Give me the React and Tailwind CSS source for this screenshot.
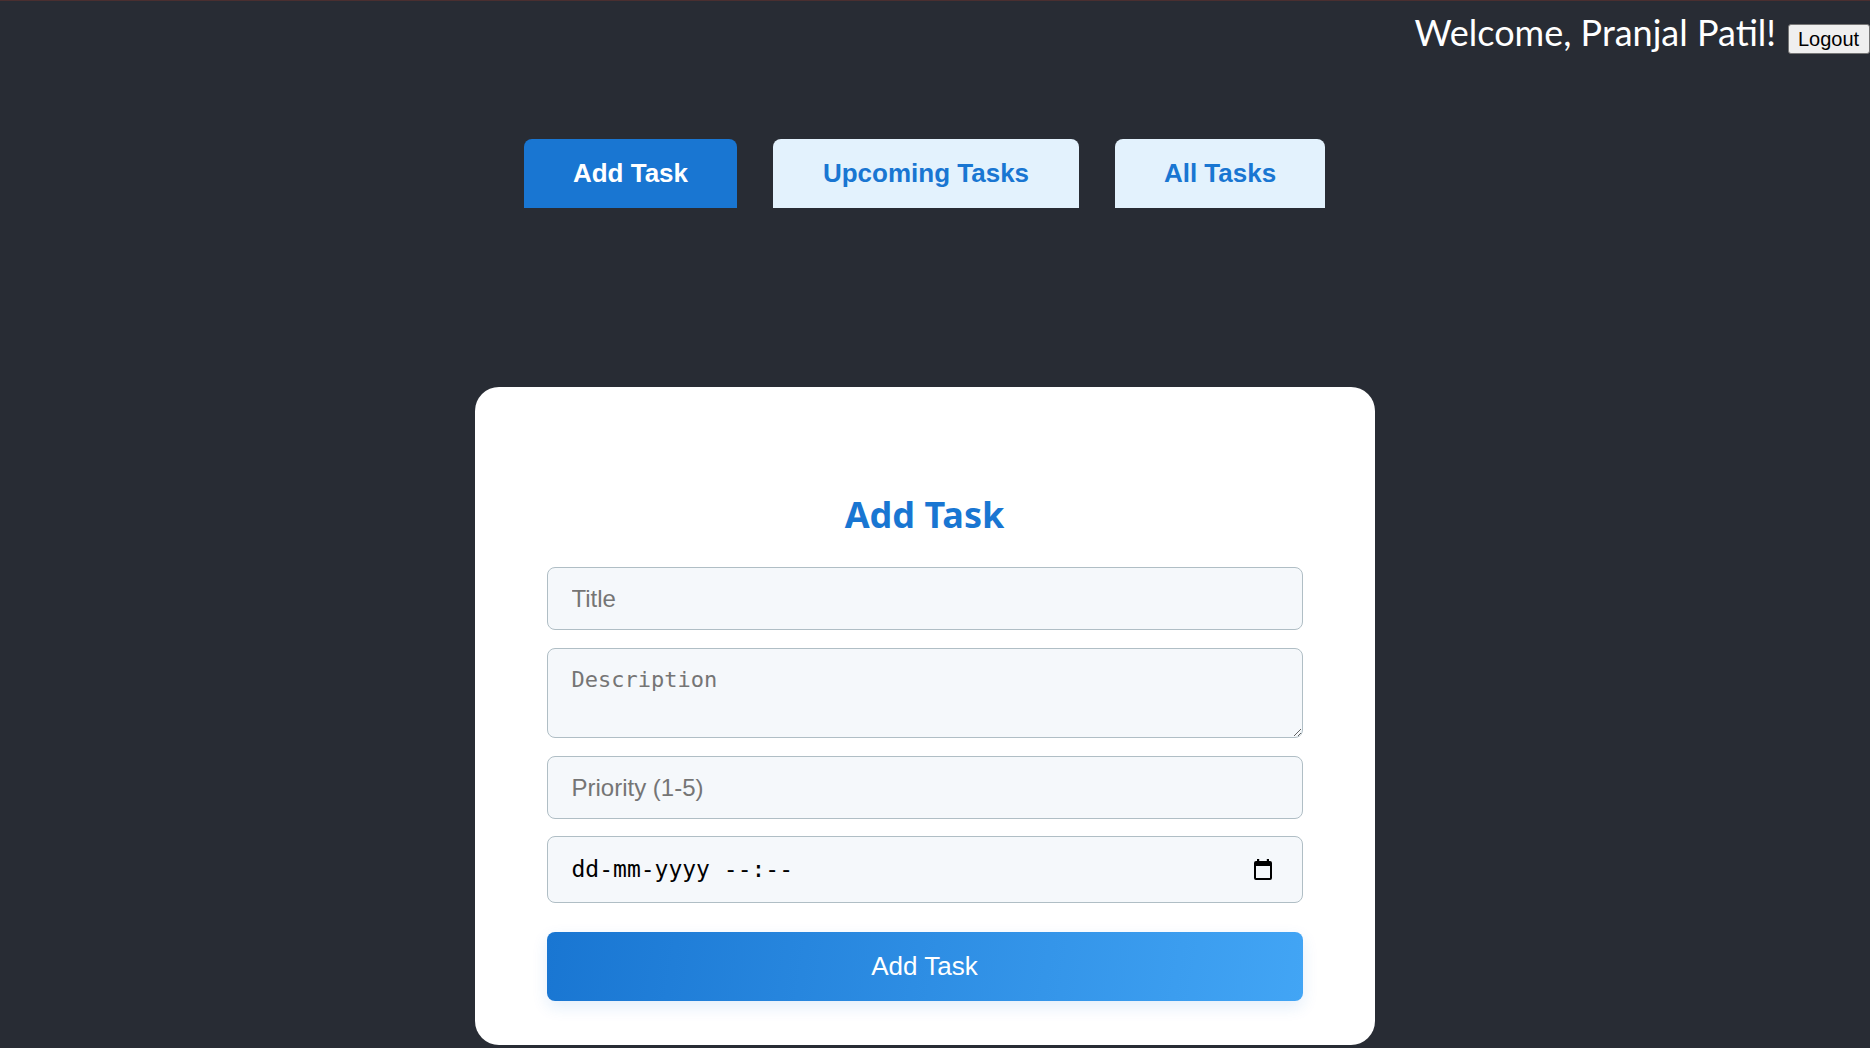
import React from "react";

function CalendarIcon() {
  return (
    <svg width="20" height="21" viewBox="0 0 20 21" fill="none">
      <rect x="4" y="0" width="2.2" height="4" fill="#000" />
      <rect x="13.8" y="0" width="2.2" height="4" fill="#000" />
      <rect x="2" y="3" width="16" height="17" rx="1" stroke="#000" strokeWidth="2" fill="none" />
      <rect x="2" y="3" width="16" height="4" fill="#000" />
    </svg>
  );
}

export default function App() {
  const inputCls =
    "w-full h-[63px] rounded-[8px] border border-[#b0bec5] bg-[#f5f8fb] pl-[24px] pr-4 text-[24px] text-black outline-none placeholder:text-[#757575] font-['Liberation_Sans',Arial,sans-serif]";
  return (
    <div className="min-h-screen w-full overflow-hidden bg-[#282c34] border-t border-[#4a2f30]">
      <header className="h-[69px] w-full flex justify-end items-baseline gap-[12px] pt-[13px]">
        <span className="text-[36px] leading-[36px] text-white font-['Lato','Open_Sans',sans-serif]">
          Welcome, Pranjal Patil!
        </span>
        <button className="h-[30px] w-[82px] shrink-0 px-[9px] border border-[#767676] rounded-[3px] bg-[#efefef] text-black text-[20px] leading-[28px] font-['Liberation_Sans',Arial,sans-serif] text-left">
          Logout
        </button>
      </header>

      <div className="w-[1849px]">
        <nav className="mt-[69px] flex justify-center gap-[36px] font-['Liberation_Sans',Arial,sans-serif] font-bold text-[26px]">
          <div className="w-[213px] h-[69px] rounded-t-[8px] bg-[#1976d2] text-white flex items-center justify-center">
            Add Task
          </div>
          <div className="w-[306px] h-[69px] rounded-t-[8px] bg-[#e3f2fd] text-[#1976d2] flex items-center justify-center">
            Upcoming Tasks
          </div>
          <div className="w-[210px] h-[69px] rounded-t-[8px] bg-[#e3f2fd] text-[#1976d2] flex items-center justify-center">
            All Tasks
          </div>
        </nav>

        <main className="mt-[179px] mx-auto w-[900px] rounded-[24px] bg-white px-[72px] pt-[106px] pb-[44px]">
          <h2 className="text-center text-[36px] leading-[43px] font-bold text-[#1976d2] font-['Noto_Sans','Open_Sans',sans-serif]">
            Add Task
          </h2>
          <form className="mt-[31px] flex flex-col" onSubmit={(e) => e.preventDefault()}>
            <input className={inputCls} placeholder="Title" />
            <textarea
              className="mt-[18px] w-full h-[90px] rounded-[8px] border border-[#b0bec5] bg-[#f5f8fb] pl-[24px] pr-4 pt-[18px] text-[22px] leading-[26px] text-black outline-none placeholder:text-[#757575] font-['DejaVu_Sans_Mono',monospace] resize-y block"
              placeholder="Description"
            />
            <input className={"mt-[18px] " + inputCls} placeholder="Priority (1-5)" />
            <div className="mt-[17px] w-full h-[67px] rounded-[8px] border border-[#b0bec5] bg-[#f5f8fb] pl-[24px] pr-[29px] flex items-center justify-between">
              <span className="text-[23px] text-black font-['DejaVu_Sans_Mono',monospace] whitespace-pre">
                dd-mm-yyyy --:--
              </span>
              <CalendarIcon />
            </div>
            <button
              type="submit"
              className="mt-[29px] w-full h-[69px] rounded-[8px] bg-[linear-gradient(100deg,#1976d2,#42a5f5)] text-white text-[26px] font-['Liberation_Sans',Arial,sans-serif] shadow-[0_6px_16px_rgba(25,118,210,0.12)]"
            >
              Add Task
            </button>
          </form>
        </main>
      </div>
    </div>
  );
}
